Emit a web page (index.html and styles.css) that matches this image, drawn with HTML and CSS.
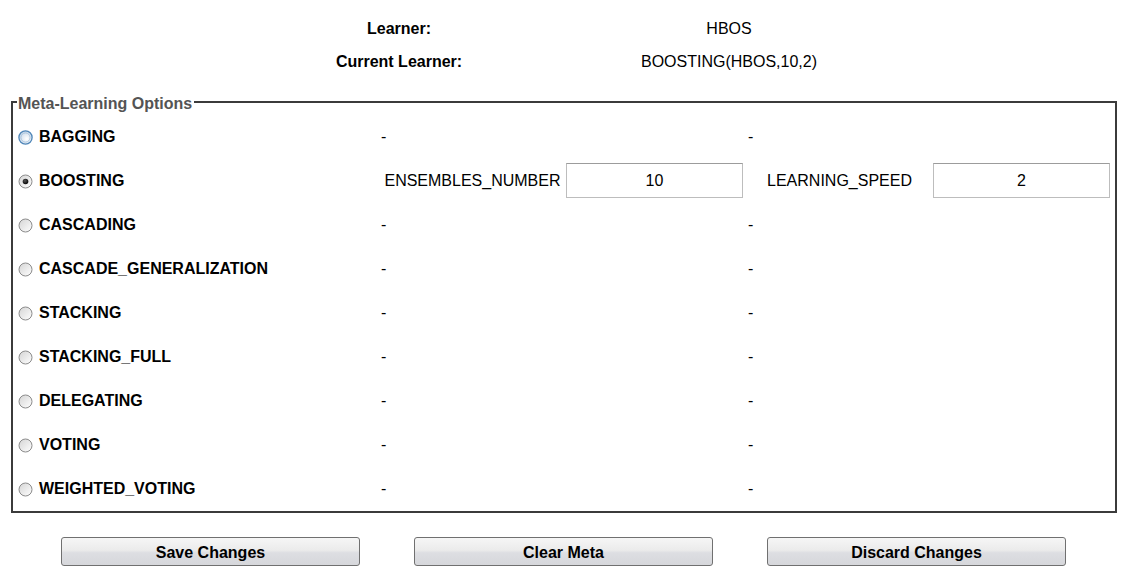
FILE: index.html
```
<!DOCTYPE html>
<html>
<head>
<meta charset="utf-8">
<link rel="stylesheet" href="styles.css">
</head>
<body>
<div class="header">
  <div class="hl">Learner:</div><div class="hv">HBOS</div>
  <div class="hl">Current Learner:</div><div class="hv">BOOSTING(HBOS,10,2)</div>
</div>
<fieldset class="meta">
  <legend class="meta-legend">Meta-Learning Options</legend>
  <div class="row">
    <div class="opt"><svg class="radio" width="15" height="15" viewBox="0 0 15 15"><defs><radialGradient id="gh" cx="0.6" cy="0.6" r="0.6"><stop offset="0" stop-color="#ffffff"/><stop offset="1" stop-color="#c9d9ea"/></radialGradient></defs><circle cx="7.5" cy="7.5" r="6.6" fill="url(#gh)" stroke="#4f86b8" stroke-width="1.3"/><circle cx="7.5" cy="7.5" r="4.6" fill="none" stroke="#9fbcd8" stroke-width="0.8"/></svg><span class="lbl">BAGGING</span></div>
    <div class="dash">-</div><div></div><div class="dash">-</div><div></div>
  </div>
  <div class="row">
    <div class="opt"><svg class="radio" width="15" height="15" viewBox="0 0 15 15"><defs><linearGradient id="gn" x1="0" y1="0" x2="1" y2="1"><stop offset="0" stop-color="#d4d4d4"/><stop offset="1" stop-color="#ffffff"/></linearGradient><radialGradient id="gd" cx="0.4" cy="0.35" r="0.7"><stop offset="0" stop-color="#555"/><stop offset="1" stop-color="#000"/></radialGradient></defs><circle cx="7.5" cy="7.5" r="6.5" fill="url(#gn)" stroke="#8c8c8c" stroke-width="1"/><circle cx="7.5" cy="7.5" r="2.8" fill="url(#gd)"/></svg><span class="lbl">BOOSTING</span></div>
    <div class="plabel">ENSEMBLES_NUMBER</div><div class="pcell"><input class="field" type="text" value="10"></div>
    <div class="plabel">LEARNING_SPEED</div><div class="pcell"><input class="field" type="text" value="2"></div>
  </div>
  <div class="row">
    <div class="opt"><svg class="radio" width="15" height="15" viewBox="0 0 15 15"><circle cx="7.5" cy="7.5" r="6.5" fill="url(#gn)" stroke="#8c8c8c" stroke-width="1"/></svg><span class="lbl">CASCADING</span></div>
    <div class="dash">-</div><div></div><div class="dash">-</div><div></div>
  </div>
  <div class="row">
    <div class="opt"><svg class="radio" width="15" height="15" viewBox="0 0 15 15"><circle cx="7.5" cy="7.5" r="6.5" fill="url(#gn)" stroke="#8c8c8c" stroke-width="1"/></svg><span class="lbl">CASCADE_GENERALIZATION</span></div>
    <div class="dash">-</div><div></div><div class="dash">-</div><div></div>
  </div>
  <div class="row">
    <div class="opt"><svg class="radio" width="15" height="15" viewBox="0 0 15 15"><circle cx="7.5" cy="7.5" r="6.5" fill="url(#gn)" stroke="#8c8c8c" stroke-width="1"/></svg><span class="lbl">STACKING</span></div>
    <div class="dash">-</div><div></div><div class="dash">-</div><div></div>
  </div>
  <div class="row">
    <div class="opt"><svg class="radio" width="15" height="15" viewBox="0 0 15 15"><circle cx="7.5" cy="7.5" r="6.5" fill="url(#gn)" stroke="#8c8c8c" stroke-width="1"/></svg><span class="lbl">STACKING_FULL</span></div>
    <div class="dash">-</div><div></div><div class="dash">-</div><div></div>
  </div>
  <div class="row">
    <div class="opt"><svg class="radio" width="15" height="15" viewBox="0 0 15 15"><circle cx="7.5" cy="7.5" r="6.5" fill="url(#gn)" stroke="#8c8c8c" stroke-width="1"/></svg><span class="lbl">DELEGATING</span></div>
    <div class="dash">-</div><div></div><div class="dash">-</div><div></div>
  </div>
  <div class="row">
    <div class="opt"><svg class="radio" width="15" height="15" viewBox="0 0 15 15"><circle cx="7.5" cy="7.5" r="6.5" fill="url(#gn)" stroke="#8c8c8c" stroke-width="1"/></svg><span class="lbl">VOTING</span></div>
    <div class="dash">-</div><div></div><div class="dash">-</div><div></div>
  </div>
  <div class="row">
    <div class="opt"><svg class="radio" width="15" height="15" viewBox="0 0 15 15"><circle cx="7.5" cy="7.5" r="6.5" fill="url(#gn)" stroke="#8c8c8c" stroke-width="1"/></svg><span class="lbl">WEIGHTED_VOTING</span></div>
    <div class="dash">-</div><div></div><div class="dash">-</div><div></div>
  </div>
</fieldset>
<div class="buttons">
  <button class="btn" type="button">Save Changes</button>
  <button class="btn" type="button">Clear Meta</button>
  <button class="btn" type="button">Discard Changes</button>
</div>
</body>
</html>
```
FILE: styles.css
```
html, body {
  margin: 0;
  padding: 0;
  background: #ffffff;
}
body {
  font-family: "Liberation Sans", Arial, sans-serif;
  font-size: 16px;
  color: #000;
  width: 1125px;
  height: 586px;
  overflow: hidden;
}
.header {
  display: grid;
  grid-template-columns: 330px 330px;
  margin-left: 234px;
  padding-top: 12px;
}
.hl, .hv {
  height: 33px;
  line-height: 33px;
  text-align: center;
}
.hl {
  font-weight: bold;
}
.meta {
  margin: 13px 0 0 11px;
  width: 1098px;
  border: 2px solid #3b3b3b;
  padding: 2px 0 0 4px;
  min-inline-size: 0;
  box-sizing: content-box;
}
.meta-legend {
  padding: 4px 2px 0 1px;
  font-weight: bold;
  font-size: 16px;
  line-height: 18px;
  color: #545454;
}
.row {
  display: grid;
  grid-template-columns: 364px 185px 182px 185px 182px;
  height: 44px;
  align-items: center;
}
.opt {
  display: flex;
  align-items: center;
}
.radio {
  display: block;
  margin-left: 1px;
}
.lbl {
  font-weight: bold;
  margin-left: 6px;
}
.dash {
  text-align: left;
}
.plabel {
  text-align: center;
  padding-right: 2px;
}
.pcell {
  display: flex;
  align-self: start;
  padding-top: 4px;
}
.field {
  width: 177px;
  height: 35px;
  box-sizing: border-box;
  border: 1px solid #bdbdbd;
  border-top-color: #9c9c9c;
  padding: 0;
  margin: 0;
  text-align: center;
  font-family: "Liberation Sans", Arial, sans-serif;
  font-size: 16px;
  color: #000;
  background: #fff;
  outline: none;
}
.buttons {
  display: flex;
  gap: 54px;
  padding-left: 61px;
  margin-top: 24px;
}
.btn {
  width: 299px;
  height: 29px;
  box-sizing: border-box;
  border: 1px solid #707070;
  border-radius: 3px;
  background: linear-gradient(to bottom, #f6f6f6 0%, #ebebeb 45%, #dddee2 55%, #d6d7db 100%);
  font-family: "Liberation Sans", Arial, sans-serif;
  font-weight: bold;
  font-size: 16px;
  color: #000;
  padding: 2px 0 0 0;
  margin: 0;
}
```
